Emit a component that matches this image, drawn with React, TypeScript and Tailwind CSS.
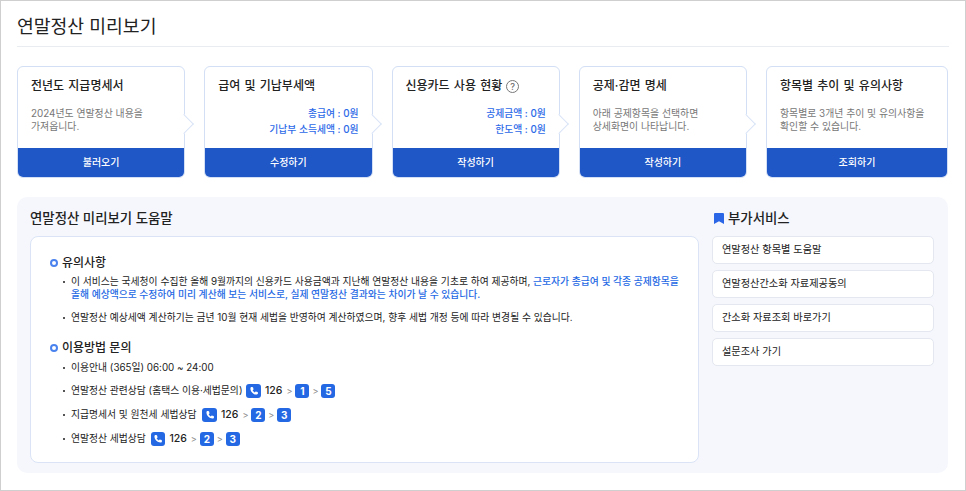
const font = { fontFamily: 'Inter, "Noto Sans CJK KR", "Noto Sans", sans-serif' };

type Card = {
  title: string;
  desc?: string[];
  amounts?: string[];
  button: string;
  help?: boolean;
  wide?: boolean;
};

const cards: Card[] = [
  { title: "전년도 지급명세서", desc: ["2024년도 연말정산 내용을", "가져옵니다."], button: "불러오기" },
  { title: "급여 및 기납부세액", amounts: ["총급여 : 0원", "기납부 소득세액 : 0원"], button: "수정하기" },
  { title: "신용카드 사용 현황", amounts: ["공제금액 : 0원", "한도액 : 0원"], button: "작성하기", help: true },
  { title: "공제·감면 명세", desc: ["아래 공제항목을 선택하면", "상세화면이 나타납니다."], button: "작성하기" },
  { title: "항목별 추이 및 유의사항", desc: ["항목별로 3개년 추이 및 유의사항을", "확인할 수 있습니다."], button: "조회하기", wide: true },
];

const services = ["연말정산 항목별 도움말", "연말정산간소화 자료제공동의", "간소화 자료조회 바로가기", "설문조사 가기"];

function StepCard({ card, last }: { card: Card; last: boolean }) {
  return (
    <div className={`relative flex h-[112px] flex-col rounded-[6px] border border-[#d3dff5] bg-white ${card.wide ? "w-[182px]" : "w-[168.25px]"}`}>
      <div className="flex-1 px-[13px] pt-[9px]">
        <div className="flex h-[20px] items-center gap-[4px] text-[12px] font-medium [word-spacing:1px] text-[#222]">
          {card.title}
          {card.help && (
            <span className="flex h-[13px] w-[13px] items-center justify-center rounded-full border border-[#777] text-[9px] leading-none text-[#666]">?</span>
          )}
        </div>
        {card.desc && (
          <div className="mt-[11px] text-[9.9px] leading-[13px] text-[#777]">
            {card.desc[0]}
            <br />
            {card.desc[1]}
          </div>
        )}
        {card.amounts && (
          <div className="mt-[10px] text-right text-[9.8px] font-medium leading-[16px] text-[#2d6ae8]">
            {card.amounts.map((line) => <div key={line}>{line}</div>)}
          </div>
        )}
      </div>
      <div className="flex h-[29px] items-center justify-center rounded-b-[5px] bg-[#1f57c6] text-[10px] font-medium text-white">
        {card.button}
      </div>
      {!last && (
        <span className="absolute right-[-7px] top-[50px] h-[14px] w-[14px] rotate-45 border-r border-t border-[#d9e4f7] bg-white" />
      )}
    </div>
  );
}

function PhoneBadge() {
  return (
    <span className="flex h-[14.5px] w-[14.5px] items-center justify-center rounded-[3px] bg-[#2468e4]">
      <svg width="10" height="10" viewBox="0 0 24 24" fill="white">
        <path d="M6.600 2.500l3 .6 1.400 5-2.300 2c1 2.300 2.900 4.200 5.200 5.200l2-2.300 5 1.400.6 3c.1 1.400-1 3-2.500 3.100C10.500 21 3 13.500 3.500 5c.1-1.500 1.700-2.600 3.100-2.500z" />
      </svg>
    </span>
  );
}

function Num({ n }: { n: number }) {
  return (
    <span className="flex h-[14px] w-[14px] items-center justify-center rounded-[3px] bg-[#2468e4] text-[10px] font-bold leading-none text-white">{n}</span>
  );
}

function Route({ nums }: { nums: number[] }) {
  return (
    <span className="flex items-center gap-[3px]">
      <PhoneBadge />
      <span className="mx-[1px] text-[10.500px] font-medium text-[#222]">126</span>
      {nums.map((n) => (
        <span key={n} className="flex items-center gap-[3px]">
          <span className="text-[9px] text-[#888]">&gt;</span>
          <Num n={n} />
        </span>
      ))}
    </span>
  );
}

function Bullet({ children, className }: { children: React.ReactNode; className?: string }) {
  return (
    <li className={`relative whitespace-nowrap pl-[21px] text-[9.8px] leading-[13px] text-[#222] ${className ?? ""}`}>
      <span className="absolute left-[13px] top-[6px] h-[2px] w-[2px] bg-[#555]" />
      {children}
    </li>
  );
}

function Heading({ children }: { children: React.ReactNode }) {
  return (
    <div className="flex items-center gap-[4px] text-[12px] font-medium leading-[18px] text-[#222]">
      <span className="h-[8px] w-[8px] rounded-full border-2 border-[#4a82ee] bg-white" />
      {children}
    </div>
  );
}

export default function App() {
  return (
    <div style={font} className="h-[491px] w-[966px] border border-[#cfcfcf] bg-white px-[16px] pt-[9px]">
      <h1 className="h-[37px] border-b border-[#e9ecf1] text-[18.25px] font-normal leading-[32px] text-[#222]">연말정산 미리보기</h1>
      <div className="mt-[19px] flex gap-[19px]">
        {cards.map((c, i) => <StepCard key={c.title} card={c} last={i === cards.length - 1} />)}
      </div>
      <div className="mt-[19px] flex h-[276px] w-[931px] gap-[13px] rounded-[10px] bg-[#f5f7fd] px-[13px] pt-[12px]">
        <div className="w-[669px]">
          <h2 className="h-[21px] text-[13.4px] font-medium leading-[18px] text-[#222]">연말정산 미리보기 도움말</h2>
          <div className="mt-[6px] h-[227px] rounded-[8px] border border-[#dbe4f6] bg-white px-[19px] pt-[17px]">
            <Heading>유의사항</Heading>
            <ul className="mt-[3px]">
              <Bullet>
                이 서비스는 국세청이 수집한 올해 9월까지의 신용카드 사용금액과 지난해 연말정산 내용을 기초로 하여 제공하며, <span className="font-medium text-[#2468e4]">근로자가 총급여 및 각종 공제항목을<br />올해 예상액으로 수정하여 미리 계산해 보는 서비스로, 실제 연말정산 결과와는 차이가 날 수 있습니다.</span>
              </Bullet>
              <Bullet className="mt-[10px]">연말정산 예상세액 계산하기는 금년 10월 현재 세법을 반영하여 계산하였으며, 향후 세법 개정 등에 따라 변경될 수 있습니다.</Bullet>
            </ul>
            <div className="mt-[15px]"><Heading>이용방법 문의</Heading></div>
            <ul className="mt-[4px] flex flex-col gap-[9.5px]">
              <Bullet>이용안내 (365일) 06:00 ~ 24:00</Bullet>
              <Bullet><span className="flex items-center gap-[4px]">연말정산 관련상담 (홈택스 이용·세법문의) <Route nums={[1, 5]} /></span></Bullet>
              <Bullet><span className="flex items-center gap-[6px]">지급명세서 및 원천세 세법상담 <Route nums={[2, 3]} /></span></Bullet>
              <Bullet><span className="flex items-center gap-[5px]">연말정산 세법상담 <Route nums={[2, 3]} /></span></Bullet>
            </ul>
          </div>
        </div>
        <div className="w-[222px]">
          <h2 className="flex h-[21px] items-center gap-[4px] pb-[3px] text-[13.4px] font-medium leading-[18px] text-[#222]">
            <svg width="10" height="11" viewBox="0 0 10 11" fill="#2a66e6" className="ml-[2px]"><path d="M0 1.200C0 .5 .5 0 1.200 0h7.600C9.500 0 10 .5 10 1.200V11L5 8.300 0 11z" /></svg>
            부가서비스
          </h2>
          <div className="mt-[6px] flex flex-col gap-[6px]">
            {services.map((s) => (
              <div key={s} className="flex h-[28px] items-center rounded-[5px] border border-[#e4e7ef] bg-white px-[9px] text-[10.2px] text-[#222]">{s}</div>
            ))}
          </div>
        </div>
      </div>
    </div>
  );
}
